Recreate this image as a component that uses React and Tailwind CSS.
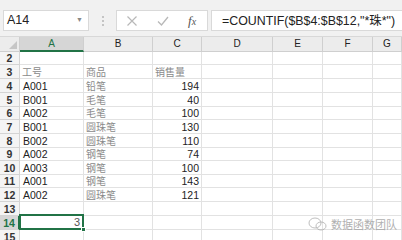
import React from 'react';

const cols = [
  { key: 'A', w: 'w-[64px]' },
  { key: 'B', w: 'w-[69px]' },
  { key: 'C', w: 'w-[49px]' },
  { key: 'D', w: 'w-[71px]' },
  { key: 'E', w: 'w-[50px]' },
  { key: 'F', w: 'w-[50px]' },
  { key: 'G', w: 'flex-1' },
];

const rows = [
  { n: 2, h: 'h-[13px]' },
  { n: 3, h: 'h-[14px]', a: '工号', b: '商品', c: '销售量', head: true },
  { n: 4, h: 'h-[14px]', a: 'A001', b: '铅笔', c: 194 },
  { n: 5, h: 'h-[14px]', a: 'B001', b: '毛笔', c: 40 },
  { n: 6, h: 'h-[13px]', a: 'A002', b: '毛笔', c: 100 },
  { n: 7, h: 'h-[14px]', a: 'B001', b: '圆珠笔', c: 130 },
  { n: 8, h: 'h-[14px]', a: 'B002', b: '圆珠笔', c: 110 },
  { n: 9, h: 'h-[13px]', a: 'A002', b: '钢笔', c: 74 },
  { n: 10, h: 'h-[14px]', a: 'A003', b: '钢笔', c: 100 },
  { n: 11, h: 'h-[13px]', a: 'A001', b: '钢笔', c: 143 },
  { n: 12, h: 'h-[14px]', a: 'A002', b: '圆珠笔', c: 121 },
  { n: 13, h: 'h-[14px]' },
  { n: 14, h: 'h-[14px]', sel: true },
  { n: 15, h: 'h-[14px]' },
];

const latin = "font-['Liberation_Sans',Arial,sans-serif]";
const cjk = "font-['Noto_Sans_CJK_SC',sans-serif]";
const cjkText = `text-[10px] leading-[11px] text-[#8a8a8a] ${cjk}`;

function Cell({ col, row }) {
  const base = `${col.w} shrink-0 border-r border-b border-[#e2e2e2] flex items-end`;
  if (col.key === 'A') {
    if (row.sel) {
      return (
        <div className={`${base} relative`}>
          <div className="absolute -left-px -top-[2px] -right-px -bottom-px border-2 border-[#217346] z-10" />
          <div className="absolute -right-[3px] -bottom-[3px] w-[5px] h-[5px] bg-[#217346] border border-white z-20" />
          <span className={`ml-auto pr-[3px] pb-[1px] text-[11px] leading-none text-[#555] ${latin}`}>3</span>
        </div>
      );
    }
    if (!row.a) return <div className={base} />;
    return (
      <div className={base}>
        {row.head ? (
          <span className={`pl-[2px] pb-[1px] ${cjkText}`}>{row.a}</span>
        ) : (
          <span className={`pl-[3px] pb-[1px] leading-none text-[10.5px] text-[#222] ${latin}`}>{row.a}</span>
        )}
      </div>
    );
  }
  if (col.key === 'B') {
    if (!row.b) return <div className={base} />;
    return (
      <div className={base}>
        <span className={`pl-[2px] pb-[1px] ${cjkText}`}>{row.b}</span>
      </div>
    );
  }
  if (col.key === 'C') {
    if (row.c === undefined) return <div className={base} />;
    if (row.head) {
      return (
        <div className={base}>
          <span className={`pl-[2px] pb-[1px] ${cjkText}`}>{row.c}</span>
        </div>
      );
    }
    return (
      <div className={base}>
        <span className={`ml-auto pr-[2px] pb-[1px] leading-none text-[10.5px] text-[#222] ${latin}`}>{row.c}</span>
      </div>
    );
  }
  return <div className={base} />;
}

export default function App() {
  return (
    <div className="w-[402px] h-[240px] overflow-hidden bg-white relative select-none">
      {/* toolbar */}
      <div className="h-[36px] bg-[#f1f1f1] flex items-start pt-[10px] pl-[3px]">
        <div className={`w-[86px] h-[21px] bg-white border border-[#d9d9d9] flex items-center pl-[3px] pr-[5px] ${latin}`}>
          <span className="text-[12.5px] text-[#222]">A14</span>
          <span className="ml-auto text-[7px] text-[#888]">▼</span>
        </div>
        <div className="w-[27px] h-[21px] flex flex-col items-center justify-center gap-[2px]">
          <span className="w-[2px] h-[2px] bg-[#b5b5b5] rounded-full" />
          <span className="w-[2px] h-[2px] bg-[#b5b5b5] rounded-full" />
          <span className="w-[2px] h-[2px] bg-[#b5b5b5] rounded-full" />
        </div>
        <div className="w-[92px] h-[21px] bg-white border border-[#d9d9d9] flex items-center">
          <svg width="12" height="12" viewBox="0 0 12 12" className="ml-[9px]">
            <path d="M1.5 1.5 L10.5 10.5 M10.5 1.5 L1.5 10.5" stroke="#b8b8b8" strokeWidth="1.2" fill="none" />
          </svg>
          <svg width="12" height="12" viewBox="0 0 12 12" className="ml-[19px]">
            <path d="M1 6.5 L4.5 10 L11 2" stroke="#b8b8b8" strokeWidth="1.3" fill="none" />
          </svg>
          <span className="ml-[19px] text-[13px] italic text-[#555] font-['Liberation_Serif',serif] leading-none">
            f<span className="text-[10px]">x</span>
          </span>
        </div>
        <div className="ml-[3px] flex-1 h-[21px] bg-white border border-[#d9d9d9] border-r-0 flex items-center pl-[10px]">
          <span className={`text-[12.4px] text-[#222] whitespace-nowrap ${latin}`}>
            =COUNTIF($B$4:$B$12,"*<span className={cjk}>珠</span>*")
          </span>
        </div>
      </div>

      {/* column headers */}
      <div className={`flex h-[16px] bg-[#ececec] border-t border-[#d8d8d8] ${latin}`}>
        <div className="w-[20px] shrink-0 border-r border-b border-[#cfcfcf] relative">
          <div className="absolute right-[2px] bottom-[2px] w-0 h-0 border-l-[8px] border-l-transparent border-b-[8px] border-b-[#c6c6c6]" />
        </div>
        {cols.map((c) => (
          <div
            key={c.key}
            className={`${c.w} shrink-0 flex items-center justify-center text-[10px] leading-none ${
              c.key === 'A'
                ? 'bg-[#d6d6d6] text-[#217346] border-r border-r-[#cfcfcf] border-b-2 border-b-[#217346]'
                : 'text-[#222] border-r border-b border-[#cfcfcf]'
            }`}
          >
            {c.key}
          </div>
        ))}
      </div>

      {/* rows */}
      {rows.map((r) => (
        <div key={r.n} className={`flex ${r.h}`}>
          <div
            className={`w-[20px] shrink-0 flex items-end justify-center pb-[1px] text-[10.5px] leading-none font-bold ${latin} ${
              r.sel
                ? 'bg-[#d6d6d6] text-[#217346] border-r-2 border-r-[#217346] border-b border-b-[#d4d4d4]'
                : 'bg-[#f4f4f4] text-[#333] border-r border-b border-[#d4d4d4]'
            }`}
          >
            {r.n}
          </div>
          {cols.map((c) => (
            <Cell key={c.key} col={c} row={r} />
          ))}
        </div>
      ))}

      {/* watermark */}
      <div className="absolute left-[308px] top-[216px] flex items-center gap-[3px] opacity-70">
        <svg width="20" height="14" viewBox="0 0 20 14">
          <ellipse cx="7" cy="6" rx="6" ry="5" fill="none" stroke="#9a9a9a" strokeWidth="0.9" />
          <ellipse cx="13" cy="9" rx="5" ry="4" fill="none" stroke="#9a9a9a" strokeWidth="0.9" />
        </svg>
        <span className={`text-[11px] text-[#8f8f8f] ${cjk}`}>数据函数团队</span>
      </div>
    </div>
  );
}
